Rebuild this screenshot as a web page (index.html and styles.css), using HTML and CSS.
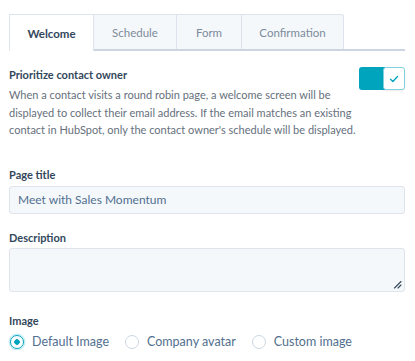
FILE: index.html
```html
<!DOCTYPE html>
<html lang="en">
<head>
    <meta charset="UTF-8">
    <meta name="viewport" content="width=device-width, initial-scale=1.0">
    <title>Welcome settings</title>
<link rel="stylesheet" href="styles.css">
</head>
<body>
    <div class="panel">
        <div class="tabs">
            <div class="tab active">Welcome</div>
            <div class="tab tab-schedule">Schedule</div>
            <div class="tab tab-form">Form</div>
            <div class="tab tab-confirm">Confirmation</div>
        </div>

        <div class="owner">
            <div class="owner-text">
                <div class="label">Prioritize contact owner</div>
                <p class="help">When a contact visits a round robin page, a welcome screen will be displayed to collect their email address. If the email matches an existing contact in HubSpot, only the contact owner's schedule will be displayed.</p>
            </div>
            <div class="toggle">
                <div class="toggle-fill"></div>
                <div class="toggle-knob">
                    <svg width="10" height="8" viewBox="0 0 10 8"><path d="M1.5 4.3 L3.9 6.5 L8.5 1.5" fill="none" stroke="#00a4bd" stroke-width="1.3" stroke-linecap="round" stroke-linejoin="round"/></svg>
                </div>
            </div>
        </div>

        <div class="field first">
            <div class="label">Page title</div>
            <div class="input">Meet with Sales Momentum</div>
        </div>

        <div class="field">
            <div class="label">Description</div>
            <div class="textarea">
                <svg class="grip" width="9" height="9" viewBox="0 0 9 9"><path d="M8 1.5 L1.5 8 M8 5 L5 8" stroke="#33475b" stroke-width="1.1" stroke-linecap="round"/></svg>
            </div>
        </div>

        <div class="field image-field">
            <div class="label">Image</div>
            <div class="radios">
                <div class="radio"><span class="dot checked"></span>Default Image</div>
                <div class="radio"><span class="dot"></span>Company avatar</div>
                <div class="radio"><span class="dot"></span>Custom image</div>
            </div>
        </div>
    </div>
</body>
</html>
```

FILE: styles.css
```css
body {
    font-family: Lato, "Noto Sans", Arial, sans-serif;
    background-color: #fff;
    color: #33475b;
    margin: 0;
    padding: 0;
}

.panel {
    padding: 14px 10px 0 9px;
}

.tabs {
    display: flex;
    border-bottom: 2px solid #cbd6e2;
}

.tab {
    height: 35px;
    display: flex;
    align-items: center;
    justify-content: center;
    font-size: 11.5px;
    color: #7c8b9c;
    background-color: #f5f8fa;
    border: 1px solid #dfe3eb;
    border-bottom: none;
    border-left: none;
    box-sizing: border-box;
}

.tab.active {
    width: 85px;
    background-color: #fff;
    color: #33475b;
    font-weight: 700;
    border-left: 1px solid #dfe3eb;
    margin-bottom: -2px;
    height: 37px;
}

.tab-schedule {
    width: 83px;
}

.tab-form {
    width: 65px;
}

.tab-confirm {
    width: 102px;
    border-radius: 0 3px 0 0;
}

.owner {
    display: flex;
    justify-content: space-between;
    margin-top: 17px;
}

.label {
    font-size: 11px;
    line-height: 14px;
    font-weight: 700;
    color: #33475b;
}

.help {
    margin: 4px 0 0;
    font-size: 11px;
    line-height: 17.5px;
    color: #66707c;
}

.toggle {
    display: flex;
    width: 46px;
    height: 23px;
    margin-top: -1px;
    flex-shrink: 0;
}

.toggle-fill {
    width: 26px;
    background-color: #00a4bd;
    border-radius: 3px 0 0 3px;
}

.toggle-knob {
    width: 22px;
    margin-left: -2px;
    box-sizing: border-box;
    background-color: #fff;
    border: 1px solid #7fd1de;
    border-radius: 3px;
    display: flex;
    align-items: center;
    justify-content: center;
    box-shadow: 0 1px 2px rgba(0, 0, 0, 0.08);
}

.field {
    margin-top: 17px;
}

.field.first {
    margin-top: 29px;
}

.input {
    margin-top: 4px;
    height: 28px;
    box-sizing: border-box;
    border: 1px solid #dfe3eb;
    border-radius: 3px;
    background-color: #f5f8fa;
    font-size: 12px;
    padding: 0 8px;
    display: flex;
    align-items: center;
    color: #516f90;
}

.textarea {
    margin-top: 3px;
    height: 44px;
    box-sizing: border-box;
    border: 1px solid #dfe3eb;
    border-radius: 3px;
    background-color: #f5f8fa;
    position: relative;
}

.grip {
    position: absolute;
    right: 2px;
    bottom: 2px;
}

.image-field {
    margin-top: 22px;
}

.radios {
    display: flex;
    margin-top: 6px;
}

.radio {
    display: flex;
    align-items: center;
    gap: 8px;
    height: 16px;
    font-size: 12.5px;
    color: #516f90;
    margin-right: 15px;
}

.dot {
    width: 14px;
    height: 14px;
    margin-left: 1px;
    box-sizing: border-box;
    border: 1px solid #cbd6e2;
    border-radius: 50%;
    background-color: #fff;
    display: inline-block;
}

.dot.checked {
    border: 1.5px solid #00a4bd;
    background: radial-gradient(circle, #00a4bd 0 2.5px, #fff 3px);
    box-shadow: 0 0 0 1.5px #c5eef3;
}
```
